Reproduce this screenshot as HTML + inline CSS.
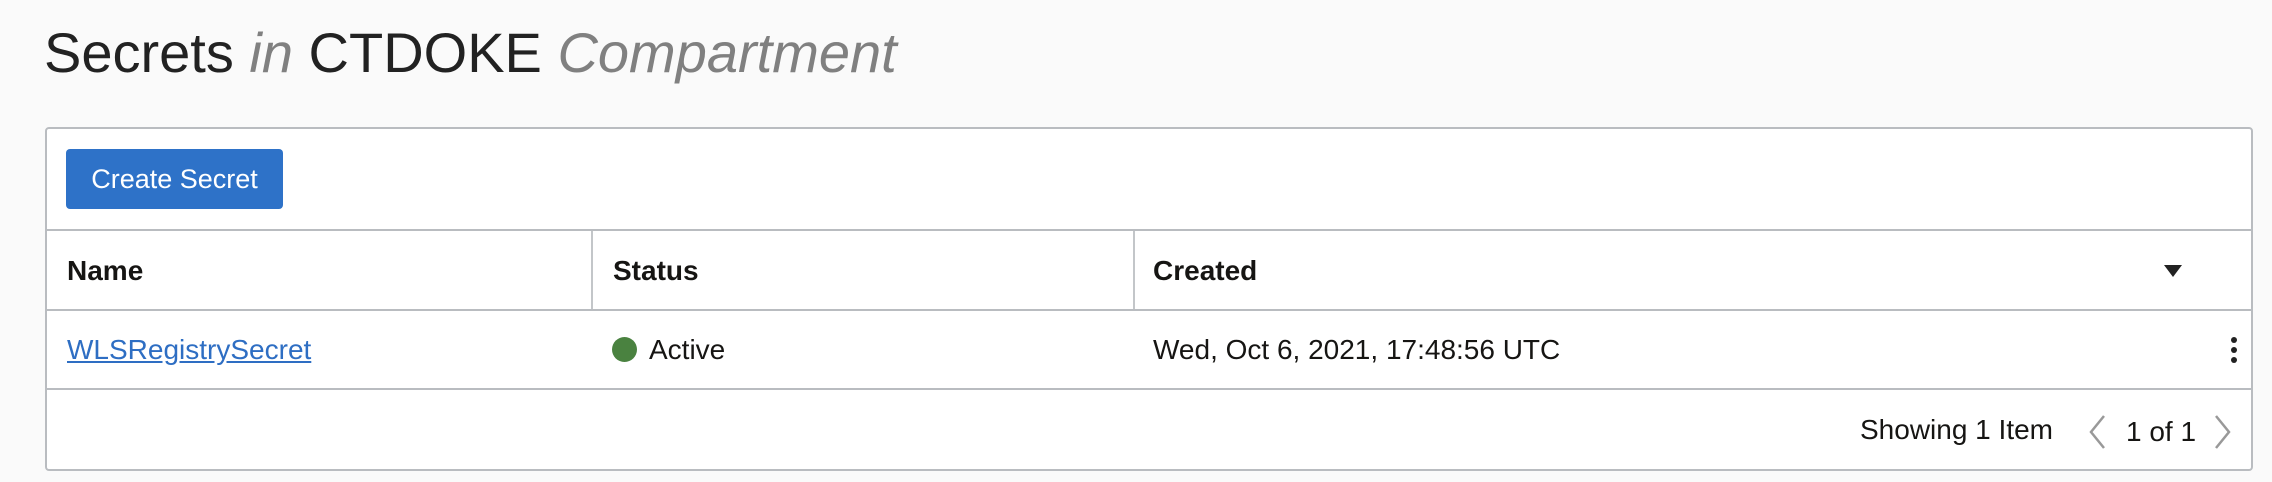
<!DOCTYPE html>
<html><head><meta charset="utf-8"><style>
*{box-sizing:border-box;margin:0;padding:0}
body{width:2272px;height:482px;background:#fafafa;font-family:"Liberation Sans",Arial,sans-serif;color:#161513;position:relative;overflow:hidden}
.abs{position:absolute;white-space:nowrap}
h1{position:absolute;left:44px;top:20px;font-size:56px;font-weight:400;color:#222}
h1 i{color:#808080}
.panel{position:absolute;left:45px;top:127px;width:2208px;height:344px;background:#fff;border:2px solid #b9bcc0;border-radius:4px}
.btn{position:absolute;left:19px;top:20px;width:217px;height:60px;background:#2e72c8;border-radius:4px;color:#fff;font-size:27px;line-height:60px;text-align:center}
.hl{position:absolute;left:0;width:100%;height:2px;background:#b9bcc0}
.vl{position:absolute;top:102px;width:2px;height:78px;background:#c3c6c9}
.th{font-weight:700;font-size:28px;top:126px}
.td{font-size:28px;top:205px}
a{color:#2e6ec3;text-decoration:underline}
</style></head><body>
<h1>Secrets <i>in</i> CTDOKE <i>Compartment</i></h1>
<div class="panel">
<div class="btn">Create Secret</div>
<div class="hl" style="top:100px"></div>
<div class="hl" style="top:180px"></div>
<div class="hl" style="top:259px"></div>
<div class="vl" style="left:544px"></div>
<div class="vl" style="left:1086px"></div>
<div class="abs th" style="left:20px">Name</div>
<div class="abs th" style="left:566px">Status</div>
<div class="abs th" style="left:1106px">Created</div>
<div class="abs" style="left:2117px;top:136px;width:0;height:0;border-left:9px solid transparent;border-right:9px solid transparent;border-top:12px solid #222"></div>
<div class="abs td" style="left:20px"><a>WLSRegistrySecret</a></div>
<div class="abs" style="left:565px;top:208px;width:25px;height:25px;border-radius:50%;background:#4a8240"></div>
<div class="abs td" style="left:602px">Active</div>
<div class="abs td" style="left:1106px">Wed, Oct 6, 2021, 17:48:56 UTC</div>
<div class="abs" style="left:2184px;top:208px;width:6px;height:6px;border-radius:50%;background:#222"></div>
<div class="abs" style="left:2184px;top:218px;width:6px;height:6px;border-radius:50%;background:#222"></div>
<div class="abs" style="left:2184px;top:228px;width:6px;height:6px;border-radius:50%;background:#222"></div>
<div class="abs" style="left:1813px;top:285px;font-size:28px">Showing 1 Item</div>
<svg class="abs" style="left:2038px;top:285px" width="24" height="36"><path d="M19 2 L6 18 L19 34" fill="none" stroke="#999" stroke-width="2.5"/></svg>
<div class="abs" style="left:2079px;top:287px;font-size:28px">1 of 1</div>
<svg class="abs" style="left:2164px;top:285px" width="24" height="36"><path d="M5 2 L18 18 L5 34" fill="none" stroke="#999" stroke-width="2.5"/></svg>
</div>
</body></html>
